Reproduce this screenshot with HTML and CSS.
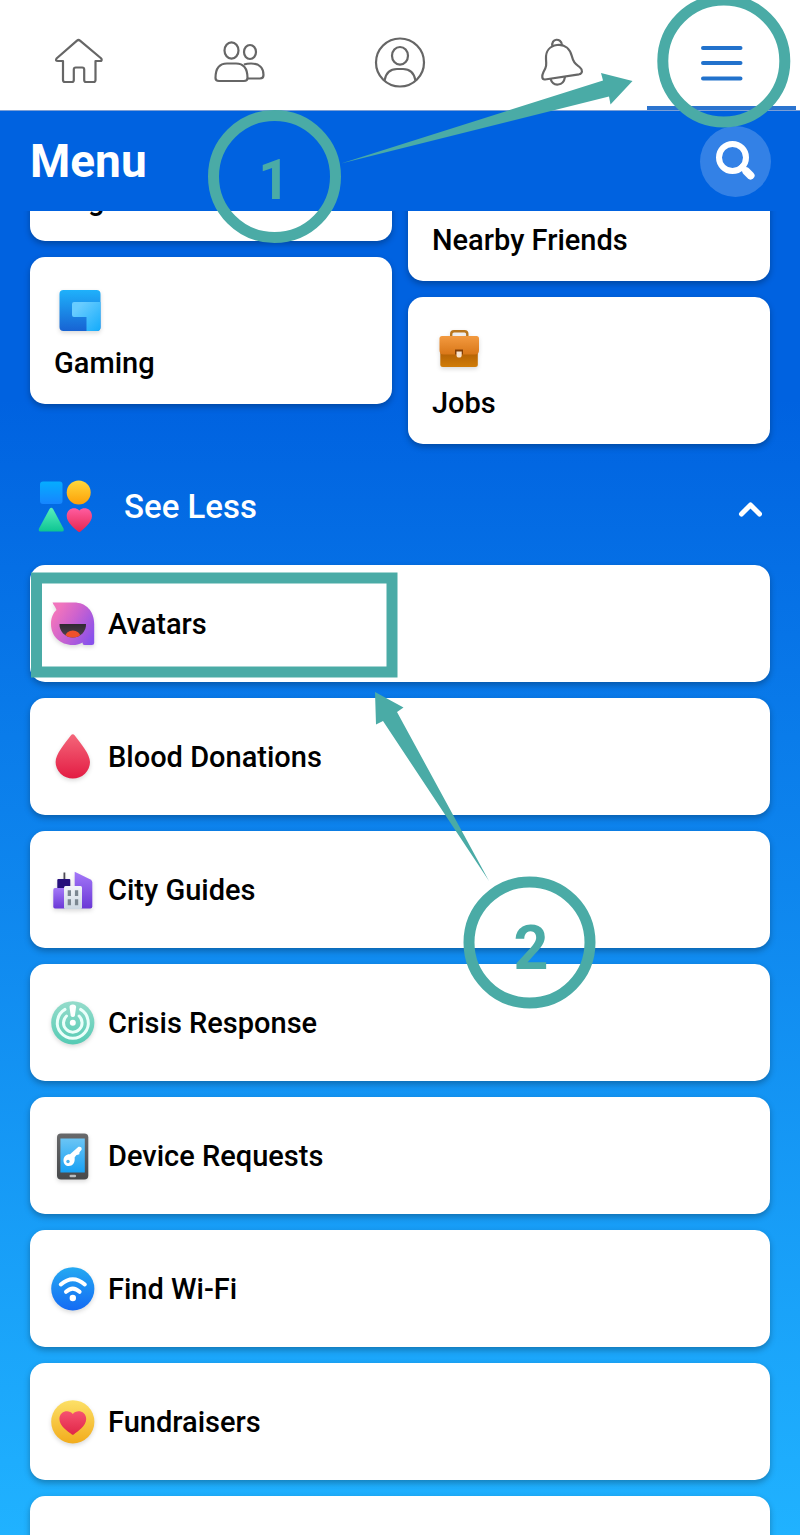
FILE: index.html
```
<!DOCTYPE html>
<html lang="en">
<head>
    <meta charset="UTF-8">
    <meta name="viewport" content="width=device-width, initial-scale=1.0">
    <title>Menu</title>
    <link rel="stylesheet" href="styles.css">
</head>
<body>
    <div class="app">
        <nav class="tabs">
            <a href="#home" class="tab" aria-label="Home">
                <svg viewBox="0 0 60 60"><path d="M27 8.600Q28.500 7.400 30 8.600L51.300 26.500Q52.500 29 50 29H45.500V48Q45.500 50 43.500 50H36Q34.200 50 34.200 48V37.500Q34.200 35.500 32.200 35.500H25.800Q23.800 35.500 23.800 37.500V48Q23.800 50 22 50H15Q13 50 13 48V29H8Q5 29 6.500 26.500Z"/></svg>
            </a>
            <a href="#friends" class="tab" aria-label="Friends">
                <svg viewBox="0 0 60 60"><ellipse cx="21.500" cy="18.500" rx="7" ry="8.200"/><ellipse cx="40" cy="20" rx="6" ry="7"/><path d="M9 49Q5.500 49 5.500 46C5.500 37 9 31.500 17 31.500H26C34 31.500 37.500 37 37.500 46Q37.500 49 34 49Z"/><path d="M34 32.500Q37 31.500 41 31.500C49 31.500 53.500 36 53.500 43Q53.500 46.500 50 46.500H38"/></svg>
            </a>
            <a href="#profile" class="tab" aria-label="Profile">
                <svg viewBox="0 0 60 60"><circle cx="30" cy="30.500" r="24"/><ellipse cx="30" cy="23.800" rx="8" ry="8.800"/><path d="M14.500 48.500C16 40.500 20 37 27 37H33C40 37 44 40.500 45.500 48.500"/></svg>
            </a>
            <a href="#notifications" class="tab" aria-label="Notifications">
                <svg viewBox="0 0 60 60"><path d="M15 47.500C11.500 47.800 11.800 43.500 13.500 40C16.500 35 16.500 33 16 27C15.500 19 20 14 27 13C35 12 40 17 41.800 24C43.500 31 46 32 50 35.500C53 38 52.500 41.500 49 42.300Z"/><path d="M22.500 14.500C20.500 6 31.500 5.500 32 13.200"/><path d="M20.500 46.800C23 55 33.500 54.500 35 44.800"/></svg>
            </a>
            <a href="#menu" class="tab tab-active" aria-label="Menu" aria-current="page">
                <svg viewBox="0 0 60 60"><path d="M11 16H48.500M11 31H48.500M11 46.500H48.500"/></svg>
            </a>
        </nav>

        <header class="header">
            <h1>Menu</h1>
            <button type="button" class="search" aria-label="Search">
                <svg viewBox="0 0 71 71"><circle cx="32.500" cy="31.500" r="13.500"/><path d="M42 41L46 45"/><path class="handle" d="M46.500 45.500L50.500 49.500"/></svg>
            </button>
        </header>

        <main class="content">
            <div class="shortcuts">
                <div class="column">
                    <a href="#pages" class="card tile"><span>Pages</span></a>
                    <a href="#gaming" class="card tile">
                        <svg class="icon" viewBox="0 0 50 50">
                            <defs>
                                <linearGradient id="gameBack" x1="0" y1="0" x2="0" y2="1"><stop offset="0" stop-color="#1fb1fb"/><stop offset="1" stop-color="#1763d3"/></linearGradient>
                                <linearGradient id="gameFront" x1="0" y1="0" x2="1" y2="1"><stop offset="0.200" stop-color="#68ccff"/><stop offset="1" stop-color="#13abfb"/></linearGradient>
                            </defs>
                            <rect x="5.500" y="4" width="41" height="41" rx="4" fill="url(#gameBack)"/>
                            <path d="M20 16H46.500V41.500Q46.500 45 43 45H32.500V31H20Q18 31 18 29V18Q18 16 20 16Z" fill="url(#gameFront)"/>
                        </svg>
                        <span>Gaming</span>
                    </a>
                </div>
                <div class="column column-low">
                    <a href="#nearby" class="card tile"><span>Nearby Friends</span></a>
                    <a href="#jobs" class="card tile">
                        <svg class="icon" viewBox="0 0 50 50">
                            <defs>
                                <linearGradient id="caseTop" x1="0" y1="0" x2="0" y2="1"><stop offset="0" stop-color="#f39a40"/><stop offset="1" stop-color="#d97718"/></linearGradient>
                                <linearGradient id="caseLow" x1="0" y1="0" x2="0" y2="1"><stop offset="0" stop-color="#a95703"/><stop offset="1" stop-color="#d07c08"/></linearGradient>
                            </defs>
                            <g transform="translate(1 -1)">
                                <path d="M18.200 12V9Q18.200 6.200 21 6.200H31.500Q34.300 6.200 34.300 9V12" fill="none" stroke="#b9761d" stroke-width="2.400"/>
                                <rect x="7.300" y="22" width="37.500" height="20" rx="2.500" fill="url(#caseLow)"/>
                                <path d="M9 11H43.500Q46 11 46 13.500V25Q46 29.500 42 29.500H10.500Q6.500 29.500 6.500 25V13.500Q6.500 11 9 11Z" fill="url(#caseTop)"/>
                                <path d="M22 24.500H30V29.500H22Z" fill="#853f04"/>
                                <path d="M23.500 26.500H28.700V30A2.600 2.600 0 0 1 23.500 30Z" fill="#f8e3ce"/>
                            </g>
                        </svg>
                        <span>Jobs</span>
                    </a>
                </div>
            </div>

            <button type="button" class="toggle" aria-expanded="true">
                <svg class="toggle-icon" viewBox="0 0 54 54">
                    <defs>
                        <linearGradient id="blue" x1="0" y1="0" x2="0" y2="1"><stop offset="0" stop-color="#05adff"/><stop offset="1" stop-color="#1685ff"/></linearGradient>
                        <linearGradient id="yellow" x1="0" y1="0" x2="0" y2="1"><stop offset="0" stop-color="#ffd83c"/><stop offset="1" stop-color="#fda007"/></linearGradient>
                        <linearGradient id="green" x1="0" y1="0" x2="0" y2="1"><stop offset="0" stop-color="#58efbd"/><stop offset="1" stop-color="#0ec592"/></linearGradient>
                        <linearGradient id="pink" x1="0" y1="0" x2="0" y2="1"><stop offset="0" stop-color="#ff5da0"/><stop offset="1" stop-color="#e62650"/></linearGradient>
                    </defs>
                    <rect x="2" y="1.500" width="22.500" height="22.500" rx="3" fill="url(#blue)"/>
                    <circle cx="40.700" cy="12.500" r="12" fill="url(#yellow)"/>
                    <path d="M11.500 29Q13.300 26.500 15.100 29L25.500 48.500Q26.500 51.500 24 51.500H2.500Q0 51.500 1 48.500Z" fill="url(#green)"/>
                    <path d="M41.300 30.500C45 26 54 28 54 36C54 42.500 46 48.500 42.500 51.500Q41.300 52.500 40.100 51.500C36.500 48.500 28.700 42.500 28.700 36C28.700 28 37.500 26 41.300 30.500Z" fill="url(#pink)"/>
                </svg>
                <span>See Less</span>
                <svg class="chevron" viewBox="0 0 24 24"><path d="M3.500 19L12.500 10L21.500 19"/></svg>
            </button>

            <div class="list">
                <a href="#avatars" class="card row">
                    <svg class="icon" viewBox="0 0 50 50">
                        <defs>
                            <linearGradient id="avatar" x1="0" y1="0.200" x2="1" y2="0.800"><stop offset="0.100" stop-color="#f074bd"/><stop offset="0.450" stop-color="#cf63cd"/><stop offset="1" stop-color="#8851ec"/></linearGradient>
                            <linearGradient id="mouth" x1="0" y1="0" x2="0" y2="1"><stop offset="0" stop-color="#2d2730"/><stop offset="1" stop-color="#554650"/></linearGradient>
                            <clipPath id="mouthClip"><path d="M11.500 25H38C38.500 32 32.500 38.500 24.800 38.500S11 32 11.500 25Z"/></clipPath>
                        </defs>
                        <path d="M4.500 3.500H26C38 3.500 46.200 12 46.200 25V44Q46.200 46 44 46H36.500Q34.500 46 34.500 43.500C31 45.500 28 46 25 46C12 46 3 37 3 25C3 19 5 14 8.500 11C8 8.500 5.500 6 4.500 3.500Z" fill="url(#avatar)"/>
                        <g clip-path="url(#mouthClip)">
                            <rect x="10" y="24" width="30" height="16" fill="url(#mouth)"/>
                            <ellipse cx="24.800" cy="37.500" rx="7.500" ry="6" fill="#f0512b"/>
                        </g>
                    </svg>
                    <span>Avatars</span>
                </a>
                <a href="#blood" class="card row">
                    <svg class="icon" viewBox="0 0 50 50">
                        <defs><linearGradient id="drop" x1="0" y1="0" x2="0" y2="1"><stop offset="0" stop-color="#f4667a"/><stop offset="1" stop-color="#e31c43"/></linearGradient></defs>
                        <path d="M22.800 3.500Q24.800 1 26.800 3.500C33 12 42 22 42 30A17.200 16.500 0 0 1 7.600 30C7.600 22 16.500 12 22.800 3.500Z" fill="url(#drop)"/>
                    </svg>
                    <span>Blood Donations</span>
                </a>
                <a href="#city" class="card row">
                    <svg class="icon" viewBox="0 0 50 50">
                        <defs>
                            <linearGradient id="building" x1="0" y1="0" x2="0" y2="1"><stop offset="0" stop-color="#a478f8"/><stop offset="1" stop-color="#6a38d6"/></linearGradient>
                            <linearGradient id="front" x1="0" y1="0" x2="0" y2="1"><stop offset="0" stop-color="#f3f6fa"/><stop offset="1" stop-color="#ccd7e2"/></linearGradient>
                        </defs>
                        <rect x="15.500" y="7.500" width="1.800" height="7" fill="#4d4a55"/>
                        <rect x="9.300" y="14" width="13" height="11" rx="1" fill="#26107c"/>
                        <path d="M7 23H17V43.500H7Q5.300 43.500 5.300 41.500V25Q5.300 23 7 23Z" fill="url(#building)"/>
                        <path d="M26.700 6.700L42.500 14.500Q44.300 15.500 44.300 17.500V41.500Q44.300 43.500 42.300 43.500H26.700Z" fill="url(#building)"/>
                        <rect x="16" y="21" width="18" height="23" rx="1.500" fill="url(#front)"/>
                        <path d="M19.700 25.300H23V31H19.700ZM26.900 25.300H30.200V31H26.900ZM19.700 34.300H23V40.300H19.700ZM26.900 34.300H30.200V40.300H26.900Z" fill="#7b8791"/>
                    </svg>
                    <span>City Guides</span>
                </a>
                <a href="#crisis" class="card row">
                    <svg class="icon" viewBox="0 0 50 50">
                        <defs><linearGradient id="crisis" x1="0" y1="0" x2="0" y2="1"><stop offset="0" stop-color="#95dccb"/><stop offset="1" stop-color="#55cbb4"/></linearGradient></defs>
                        <circle cx="24.800" cy="24.800" r="21.600" fill="url(#crisis)"/>
                        <g fill="none" stroke="#eafffa" stroke-width="3" stroke-linecap="round">
                            <path d="M17 11.400A15.500 15.500 0 1 0 32.600 11.400"/>
                            <path d="M18.500 18A9.300 9.300 0 1 0 31.100 18"/>
                        </g>
                        <path d="M21.500 9Q21.500 6.500 24.800 6.500T28.100 9L26.900 17.500Q26.500 19 24.800 19T22.700 17.500Z" fill="#fff"/>
                        <circle cx="24.800" cy="24.800" r="3" fill="#fff"/>
                    </svg>
                    <span>Crisis Response</span>
                </a>
                <a href="#devices" class="card row">
                    <svg class="icon" viewBox="0 0 50 50">
                        <defs>
                            <linearGradient id="phone" x1="0" y1="0" x2="0" y2="1"><stop offset="0" stop-color="#68696b"/><stop offset="1" stop-color="#47494b"/></linearGradient>
                            <linearGradient id="screen" x1="0" y1="0" x2="0" y2="1"><stop offset="0" stop-color="#6bc5f5"/><stop offset="1" stop-color="#18a1f4"/></linearGradient>
                        </defs>
                        <rect x="9" y="2.500" width="31.300" height="46" rx="4" fill="url(#phone)"/>
                        <rect x="12.400" y="7.500" width="24.400" height="34" fill="url(#screen)"/>
                        <rect x="21.500" y="43.800" width="6.600" height="2.400" rx="1.200" fill="#b9bcbf"/>
                        <path d="M15.500 29.500C15.500 25.500 18.500 23 22 23.300L30.500 15.800Q34.200 15.300 33.600 18.700L31.500 21.200L31.300 23.300L28.200 24.300L26.600 26.500C27.400 31.500 24.500 35 20.800 35C17.700 35 15.500 33 15.500 29.500Z" fill="#fff"/>
                        <circle cx="20" cy="30.500" r="1.700" fill="#4bb2ee"/>
                    </svg>
                    <span>Device Requests</span>
                </a>
                <a href="#wifi" class="card row">
                    <svg class="icon" viewBox="0 0 50 50">
                        <defs><linearGradient id="wifi" x1="0" y1="0" x2="0" y2="1"><stop offset="0" stop-color="#24a9f2"/><stop offset="1" stop-color="#146bf4"/></linearGradient></defs>
                        <circle cx="24.800" cy="24.800" r="21.600" fill="url(#wifi)"/>
                        <g fill="none" stroke="#fff" stroke-width="4" stroke-linecap="round">
                            <path d="M12.800 20.500Q24.800 10 36.800 20.500"/>
                            <path d="M18 27.800Q24.800 21.500 31.600 27.800"/>
                        </g>
                        <circle cx="24.800" cy="34" r="3.200" fill="#fff"/>
                    </svg>
                    <span>Find Wi-Fi</span>
                </a>
                <a href="#fundraisers" class="card row">
                    <svg class="icon" viewBox="0 0 50 50">
                        <defs>
                            <linearGradient id="coin" x1="0" y1="0" x2="0" y2="1"><stop offset="0" stop-color="#fce067"/><stop offset="1" stop-color="#f2ac1c"/></linearGradient>
                            <linearGradient id="heart" x1="0" y1="0" x2="0" y2="1"><stop offset="0" stop-color="#f65270"/><stop offset="1" stop-color="#e02647"/></linearGradient>
                        </defs>
                        <circle cx="24.800" cy="24.800" r="21.600" fill="url(#coin)"/>
                        <path d="M24.800 17C28.500 12 38.200 14 38.200 22C38.200 29 29.500 34.500 26 37.300Q24.800 38.300 23.600 37.300C20 34.500 11.400 29 11.400 22C11.400 14 21 12 24.800 17Z" fill="url(#heart)"/>
                    </svg>
                    <span>Fundraisers</span>
                </a>
                <a href="#more" class="card row" aria-label="More"></a>
            </div>
        </main>

        <!-- step markers drawn over the screen -->
        <svg class="guide" viewBox="0 0 800 1535">
            <g class="guide-line">
                <circle cx="274.500" cy="176.500" r="61"/>
                <circle cx="723.800" cy="61" r="61"/>
                <circle cx="529.500" cy="942.500" r="60.500"/>
                <rect x="36.500" y="578" width="355.500" height="94"/>
            </g>
            <path d="M341 163.500L603 80.500L601 73L632.500 81L610.500 104.500L609 96.500Z"/>
            <path d="M489 881L397 712L403.500 707.500L375 692L376 724.500L383 721Z"/>
            <text class="step-one" x="274" y="199">1</text>
            <text class="step-two" x="531" y="969">2</text>
        </svg>
    </div>
</body>
</html>
```
FILE: styles.css
```
* {
    box-sizing: border-box;
}
body {
    margin: 0;
    font-family: Roboto, "Liberation Sans", sans-serif;
    font-weight: 500;
    color: #000;
}
a {
    color: inherit;
    text-decoration: none;
}
button {
    font: inherit;
    border: none;
    cursor: pointer;
}
svg {
    display: block;
    flex-shrink: 0;
}
.app {
    position: relative;
    display: flex;
    flex-direction: column;
    height: 100vh;
    overflow: hidden;
    background: linear-gradient(#0062e0 26%, #0a7cea 48%, #20b2ff 100%);
}

/* top tabs */
.tabs {
    display: grid;
    grid-template-columns: repeat(5, 1fr);
    height: 111px;
    padding-top: 4px;
    background-color: #fff;
    border-bottom: 1px solid #7c9fd6;
    flex-shrink: 0;
}
.tab {
    display: flex;
    justify-content: center;
    padding-top: 28px;
}
.tab svg {
    width: 60px;
    height: 60px;
    fill: none;
    stroke: #666;
    stroke-width: 2.2;
    stroke-linejoin: round;
}
.tab-active {
    margin: 0 4px 0 7px;
    border-bottom: 4px solid #2b74cf;
    border-radius: 3px 3px 0 0;
}
.tab-active svg {
    stroke: #2272cc;
    stroke-width: 4;
    stroke-linecap: round;
}

/* title bar */
.header {
    display: flex;
    justify-content: space-between;
    align-items: center;
    height: 100px;
    padding: 0 29px 0 30px;
    flex-shrink: 0;
}
h1 {
    margin: 0;
    font-size: 46px;
    line-height: 56px;
    font-weight: 700;
    color: #fff;
}
.search {
    width: 71px;
    height: 71px;
    padding: 0;
    border-radius: 50%;
    background-color: rgba(255, 255, 255, 0.2);
}
.search svg {
    width: 71px;
    height: 71px;
    fill: none;
    stroke: #fff;
    stroke-width: 6;
    stroke-linecap: round;
}
.search .handle {
    stroke-width: 8;
}

.content {
    flex: 1;
    min-height: 0;
    padding: 0 30px;
    overflow: hidden;
}
.card {
    display: flex;
    background-color: #fff;
    border-radius: 15px;
    box-shadow: 0 3px 6px rgba(0, 0, 0, 0.28);
    font-size: 29px;
    line-height: 34px;
}
.icon {
    width: 50px;
    height: 50px;
    filter: drop-shadow(0 2px 2px rgba(0, 0, 0, 0.15));
}

/* shortcuts, scrolled partly under the title bar */
.shortcuts {
    display: grid;
    grid-template-columns: 1fr 1fr;
    gap: 16px;
    margin-top: -117px;
}
.column {
    display: flex;
    flex-direction: column;
    gap: 16px;
}
.column-low {
    padding-top: 40px;
}
.tile {
    flex-direction: column;
    justify-content: flex-end;
    gap: 10px;
    height: 147px;
    padding: 0 24px 24px;
}

.toggle {
    display: flex;
    align-items: center;
    gap: 32px;
    width: 100%;
    height: 121px;
    padding: 4px 8px 0;
    background: none;
    color: #fff;
    font-size: 33px;
    line-height: 40px;
}
.toggle-icon {
    width: 54px;
    height: 54px;
}
.chevron {
    width: 24px;
    height: 24px;
    margin-left: auto;
    fill: none;
    stroke: #fff;
    stroke-width: 5;
    stroke-linecap: round;
    stroke-linejoin: round;
}

.list {
    display: flex;
    flex-direction: column;
    gap: 16px;
}
.row {
    align-items: center;
    gap: 10px;
    height: 117px;
    padding: 1px 18px 0;
    flex-shrink: 0;
}

.guide {
    position: absolute;
    top: 0;
    left: 0;
    width: 100%;
    fill: #4aaba6;
    pointer-events: none;
}
.guide-line {
    fill: none;
    stroke: #4aaba6;
    stroke-width: 11;
}
.guide text {
    font-weight: 700;
    text-anchor: middle;
}
.step-one {
    font-size: 55px;
}
.step-two {
    font-size: 61px;
}
```
